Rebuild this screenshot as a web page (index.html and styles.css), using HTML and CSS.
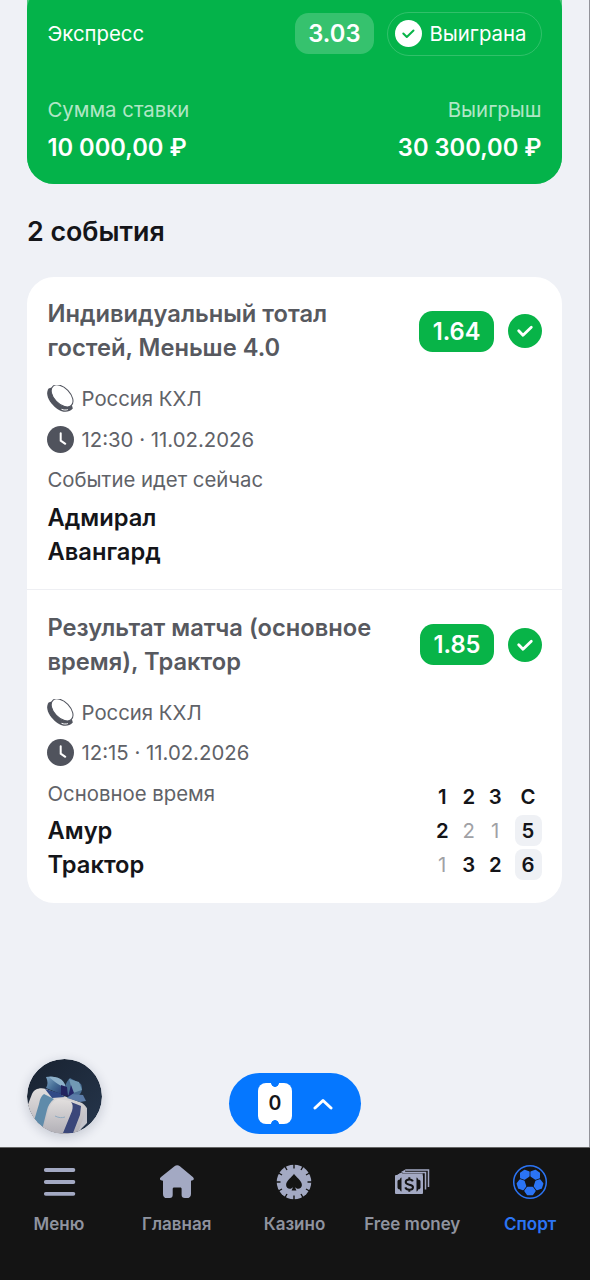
FILE: index.html
```html
<!DOCTYPE html>
<html lang="ru">
<head>
<meta charset="utf-8">
<title>Экспресс</title>
<link rel="stylesheet" href="styles.css">
</head>
<body>
<svg class="defs" aria-hidden="true">
  <symbol id="puck" viewBox="0 0 27 27">
    <path d="M1.600 3.500C-.6 6.500-.3 11.500 3 16.500c3.300 5 9 9.500 13.500 10.200 3.800.4 7-.5 9.300-3.200L24 17 6 2z" fill="#50535d"/>
    <ellipse cx="15.100" cy="10.900" rx="13.300" ry="8" transform="rotate(46 15.100 10.900)" fill="#fff" stroke="#50535d" stroke-width="1"/>
    <path d="M14.500 24.300c2.300.9 4.400.9 6.300.3" fill="none" stroke="#fff" stroke-width="1"/>
  </symbol>
  <symbol id="clock" viewBox="0 0 27 27">
    <circle cx="13.500" cy="13.500" r="13.500" fill="#50535d"/>
    <path d="M13.700 7.300v7.400l4.600 3.100" fill="none" stroke="#fff" stroke-width="2" stroke-linecap="round"/>
  </symbol>
  <symbol id="check" viewBox="0 0 34 34">
    <circle cx="17" cy="17" r="17" fill="#08b448"/>
    <path d="M10.700 16.700l4.300 4.500 8.300-8" fill="none" stroke="#fff" stroke-width="2.800" stroke-linecap="round" stroke-linejoin="round"/>
  </symbol>
</svg>
<main class="page">
  <section class="summary">
    <div class="summary-body">
      <div class="summary-top">
        <span class="kind">Экспресс</span>
        <span class="odds odds-soft">3.03</span>
        <span class="status">
          <svg class="icon" viewBox="0 0 27 27"><circle cx="13.500" cy="13.500" r="13.500" fill="#fff"/><path d="M8.300 13.500l3.500 3.500 6.700-6.500" fill="none" stroke="#08b448" stroke-width="2" stroke-linecap="round" stroke-linejoin="round"/></svg>
          Выиграна
        </span>
      </div>
      <div class="amounts">
        <div><div class="label">Сумма ставки</div><div class="value">10 000,00 ₽</div></div>
        <div class="win"><div class="label">Выигрыш</div><div class="value">30 300,00 ₽</div></div>
      </div>
    </div>
  </section>

  <h2 class="heading">2 события</h2>

  <section class="events">
    <article class="event">
      <div class="event-top">
        <h3 class="title">Индивидуальный тотал<br>гостей, Меньше 4.0</h3>
        <span class="odds">1.64</span>
        <svg class="check"><use href="#check"/></svg>
      </div>
      <div class="meta"><svg class="icon"><use href="#puck"/></svg>Россия КХЛ</div>
      <div class="meta"><svg class="icon"><use href="#clock"/></svg>12:30 · 11.02.2026</div>
      <div class="teams-row">
        <div>
          <div class="phase">Событие идет сейчас</div>
          <div class="team">Адмирал</div>
          <div class="team">Авангард</div>
        </div>
      </div>
    </article>
    <article class="event">
      <div class="event-top">
        <h3 class="title">Результат матча (основное<br>время), Трактор</h3>
        <span class="odds">1.85</span>
        <svg class="check"><use href="#check"/></svg>
      </div>
      <div class="meta"><svg class="icon"><use href="#puck"/></svg>Россия КХЛ</div>
      <div class="meta"><svg class="icon"><use href="#clock"/></svg>12:15 · 11.02.2026</div>
      <div class="teams-row">
        <div>
          <div class="phase">Основное время</div>
          <div class="team">Амур</div>
          <div class="team">Трактор</div>
        </div>
        <div class="scores">
          <span>1</span><span>2</span><span>3</span><span>С</span>
          <span>2</span><span class="lost">2</span><span class="lost">1</span><span class="total">5</span>
          <span class="lost">1</span><span>3</span><span>2</span><span class="total">6</span>
        </div>
      </div>
    </article>
  </section>

  <div class="floating">
    <svg class="gift" viewBox="0 0 75 75">
      <defs>
        <clipPath id="disc"><circle cx="37.500" cy="37.500" r="37.500"/></clipPath>
        <linearGradient id="night" x1="0" y1="0" x2="1" y2="1"><stop offset="0" stop-color="#182230"/><stop offset="1" stop-color="#26364c"/></linearGradient>
        <linearGradient id="box" x1="0" y1="0" x2="0" y2="1"><stop offset="0" stop-color="#e2dfde"/><stop offset="1" stop-color="#b0aeb5"/></linearGradient>
        <linearGradient id="satin" x1="0" y1="0" x2="1" y2="1"><stop offset="0" stop-color="#7fa6c4"/><stop offset=".5" stop-color="#456d95"/><stop offset="1" stop-color="#263873"/></linearGradient>
      </defs>
      <g clip-path="url(#disc)">
        <rect width="75" height="75" fill="url(#night)"/>
        <path d="M5 35c2-5 8-7 14-5l36 14c5 3 6 7 4 13l-8 20H0V48z" fill="url(#box)"/>
        <path d="M31 40c-4 1-7 4-9 9l-7 27h26l8-26c1-5-1-7-5-8z" fill="url(#box)"/>
        <path d="M17 35l10 5c-4 3-6 7-7 11l-5 20-9-6 6-20c1-5 2-8 5-10z" fill="#5f8baa"/>
        <path d="M44 43l10 4-1 9-7 18H36l9-22c1-4 1-7-1-9z" fill="#3b477a"/>
        <path d="M54 45c5 2 6 5 4 10l-7 18 9-9V49z" fill="#c4c4cb"/>
        <path d="M28 57c4 2 7 2 10 1" fill="none" stroke="#8faac0" stroke-width="1"/>
        <path d="M36 36L19 29c2-3 2-7 0-11 8-2 14 1 17 10z" fill="url(#satin)"/>
        <path d="M22 18c9-1 16 2 18 14-5-6-11-7-18-14z" fill="#8eb1ca"/>
        <path d="M37 35c0-7 2-12 6-16l11 6c2 5 1 9-4 13z" fill="#496e94"/>
        <path d="M42 20l10 3 3 8-9 3z" fill="#7199b4"/>
        <path d="M43 35l13 1 3 6-6 1-13-4z" fill="#5b7ba8"/>
        <path d="M18 30l14 4 6 4-13 1z" fill="#304985"/>
        <path d="M34 26l6 2 1 9-7-1z" fill="#22235f"/>
        <path d="M44 26l3 8-6 4z" fill="#25276a"/>
      </g>
    </svg>
    <div class="coupon">
      <span class="ticket">0</span>
      <svg class="chevron" viewBox="0 0 20 12"><path d="M2 10l8-7.500 8 7.500" fill="none" stroke="#fff" stroke-width="3" stroke-linecap="round" stroke-linejoin="round"/></svg>
    </div>
  </div>
</main>

<nav class="tabs">
  <a class="tab"><svg viewBox="0 0 36 36"><path d="M4.800 6h27.600M4.800 18h27.600M4.800 29.800h27.600" stroke="currentColor" stroke-width="3.800" stroke-linecap="round"/></svg><span>Меню</span></a>
  <a class="tab"><svg viewBox="0 0 36 36"><path d="M15.500 2.300c1.700-1.300 3.700-1.300 5.400 0L33.800 13c2 1.700.9 3.700-1.800 3.700v13.200c0 2.600-1.600 4.200-4.200 4.200h-2c-2 0-3.200-1-3.200-3v-6c0-1-.4-1.500-1.400-1.500h-6c-1 0-1.500.5-1.500 1.500v6c0 2-1 3-3 3H8c-2.600 0-4-1.600-4-4.200V16.700c-3 0-4-2-2-3.700z" fill="currentColor"/></svg><span>Главная</span></a>
  <a class="tab"><svg viewBox="0 0 36 36"><circle cx="18" cy="18" r="17.300" fill="currentColor"/><path d="M18 0v4.500M18 31.500v5M0 18h4.500M31.500 18h5M9 2.500l2 3.500M25 30l2 3.500M27 2.500l-2 3.500M11 30L9 33.500M2.500 9l3.500 2M30 25l3.500 2M2.500 27L6 25M30 11l3.500-2" stroke="#141414" stroke-width="1.400"/><path d="M18 9.800c1.500 3 7.900 6.600 7.900 11.100 0 4-4.900 5-7 2l1.500 3.500h-4.800l1.500-3.500c-2.100 3-7 2-7-2 0-4.500 6.400-8.100 7.900-11.100z" fill="#141414"/></svg><span>Казино</span></a>
  <a class="tab"><svg viewBox="0 0 36 36"><path d="M11.500 6h23v17M8.500 8.600h23v17" fill="none" stroke="currentColor" stroke-width="1.500"/><path d="M11.800 5.300L7 8h4zM8.500 7.900L3 11h5z" fill="currentColor"/><path d="M5.500 9.500h23.200v2H3z" fill="currentColor"/><rect x="1" y="11" width="28" height="19" rx="1" fill="currentColor"/><path d="M7.500 13.500v14c-1-.2-1.500-1-1.500-2-2-.4-2.500-1.200-2.500-2v-6c0-1 .5-1.700 2.500-2 0-1 .5-1.800 1.500-2zM22.500 13.500v14c1-.2 1.500-1 1.500-2 2-.4 2.500-1.200 2.500-2v-6c0-1-.5-1.700-2.500-2 0-1-.5-1.800-1.500-2z" fill="#141414"/><path d="M18.800 17.400c-.4-1.300-1.700-2-3.500-2-2 0-3.600 1-3.600 2.600 0 3.800 7.300 1.500 7.300 5.200 0 1.600-1.500 2.500-3.700 2.500-2 0-3.500-.8-4-2.300M15.300 13.200v2.200M15.300 25.500v2.300" fill="none" stroke="#141414" stroke-width="2"/></svg><span>Free money</span></a>
  <a class="tab active"><svg viewBox="0 0 36 36"><circle cx="18" cy="18" r="16.300" fill="none" stroke="currentColor" stroke-width="1.500"/><g fill="currentColor" stroke="currentColor" stroke-width="2" stroke-linejoin="round"><path id="patch" d="M15.500 23.800h5l2.200 3-2.500 3.500h-4.400l-2.500-3.500z"/><use href="#patch" transform="rotate(72 18 18)"/><use href="#patch" transform="rotate(144 18 18)"/><use href="#patch" transform="rotate(216 18 18)"/><use href="#patch" transform="rotate(288 18 18)"/></g></svg><span>Спорт</span></a>
</nav>
</body>
</html>
```
FILE: styles.css
```css
* { box-sizing: border-box; }
body {
  margin: 0;
  height: 1280px;
  display: flex;
  flex-direction: column;
  overflow: hidden;
  background: #eff1f6;
  color: #141519;
  font-family: Inter, "Noto Sans", sans-serif;
  font-size: 20.35px;
}
h2, h3 { margin: 0; }
svg { display: block; flex: none; }
.defs { position: absolute; width: 0; height: 0; }
.page {
  height: 1147px;
  padding: 0 27px;
  display: flex;
  flex-direction: column;
  border-right: 1px solid #92939a;
}
.summary {
  height: 184px;
  overflow: hidden;
  border-radius: 0 0 27px 27px;
  background: #4bc77b;
  color: #fff;
}
.summary-body {
  height: 197px;
  margin-top: -12.500px;
  padding: 24px 20.500px 0;
  border-radius: 22px 22px 0 0;
  background: #04b34a;
}
.summary-top { display: flex; align-items: center; height: 44px; }
.kind { flex: 1; }
.odds {
  height: 41px;
  padding: 0 13.500px;
  border-radius: 13.500px;
  background: #08b448;
  color: #fff;
  font-size: 23.700px;
  font-weight: 600;
  line-height: 41px;
}
.odds-soft { background: rgba(255, 255, 255, .2); }
.status {
  display: flex;
  align-items: center;
  gap: 7px;
  height: 44px;
  margin-left: 13.500px;
  padding: 0 14px 0 7px;
  border: 1.500px solid rgba(255, 255, 255, .18);
  border-radius: 22px;
}
.icon { width: 27px; height: 27px; }
.amounts { display: flex; justify-content: space-between; margin-top: 40.500px; }
.label { line-height: 27px; color: rgba(255, 255, 255, .7); }
.value { margin-top: 7.500px; line-height: 34px; font-size: 23.700px; font-weight: 600; }
.win { text-align: right; }
.heading { margin: 29.500px 0 29px; font-size: 26.800px; font-weight: 600; line-height: 34px; }
.events { border-radius: 27px; background: #fff; }
.event { height: 312.500px; padding: 20.500px 20.500px 0; }
.event + .event { height: 313.500px; border-top: 1.500px solid #eeeff3; padding-top: 20.500px; }
.event-top { display: flex; align-items: center; margin-bottom: 20px; }
.title { flex: 1; color: #57595f; font-size: 23.700px; font-weight: 600; line-height: 34px; }
.check { width: 34px; height: 34px; margin-left: 13.500px; }
.meta { display: flex; gap: 7px; height: 27px; margin-bottom: 13.700px; line-height: 27px; color: #606268; }
.meta .icon { margin-left: -.5px; margin-right: .5px; }
.teams-row { display: flex; justify-content: space-between; }
.phase { height: 27px; margin-bottom: 7.500px; line-height: 27px; color: #606268; }
.team { font-size: 23.700px; font-weight: 600; line-height: 34px; }
.scores {
  display: grid;
  grid-template-columns: 26.500px 26.500px 26.500px 33px;
  grid-auto-rows: 34px;
  align-items: center;
  justify-items: center;
  font-weight: 600;
}
.scores span:nth-child(4n) { width: 27px; margin-left: 6px; text-align: center; }
.scores .lost { color: #a0a1a5; font-weight: 400; }
.scores .total { border-radius: 8px; background: #eff1f5; line-height: 31px; }
.floating { display: flex; margin-top: auto; margin-bottom: 13px; align-items: flex-end; }
.gift { width: 75px; height: 75px; border-radius: 50%; box-shadow: 0 3px 12px rgba(20, 30, 60, .2); }
.coupon {
  display: flex;
  align-items: center;
  gap: 20.500px;
  width: 132px;
  height: 61px;
  margin-left: 127px;
  padding-left: 29px;
  border-radius: 31px;
  background: #0577ff;
}
.ticket {
  width: 34px;
  height: 41px;
  border-radius: 8px;
  background:
    radial-gradient(circle at 50% 0, #0577ff 3.500px, transparent 4.200px),
    radial-gradient(circle at 50% 100%, #0577ff 3.500px, #fff 4.200px);
  font-size: 19.500px;
  font-weight: 600;
  line-height: 41px;
  text-align: center;
}
.chevron { width: 20px; height: 12px; }
.tabs {
  display: grid;
  grid-template-columns: repeat(5, 1fr);
  height: 133px;
  padding-right: 1px;
  background: #141414;
  border-top: 1px solid #666;
}
.tab {
  display: flex;
  flex-direction: column;
  align-items: center;
  gap: 13px;
  padding-top: 16px;
  color: #a3a9c3;
  font-size: 17px;
  font-weight: 600;
  line-height: 22px;
  white-space: nowrap;
}
.tab span { color: #8f939f; }
.tab svg { width: 36px; height: 36px; }
.tab.active, .tab.active span { color: #2b74f5; }
```
